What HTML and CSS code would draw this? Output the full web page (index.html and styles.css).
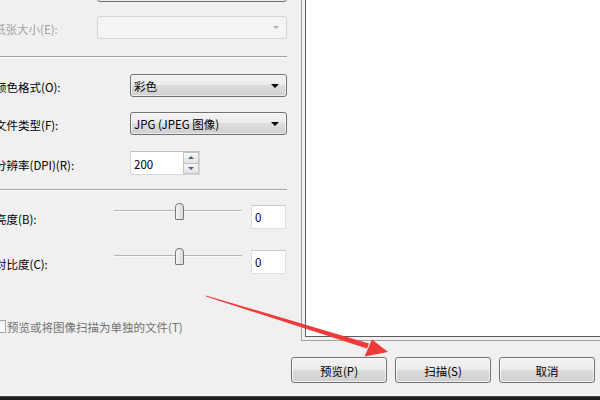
FILE: index.html
```html
<!DOCTYPE html>
<html>
<head>
<meta charset="utf-8">
<link rel="stylesheet" href="styles.css">
</head>
<body>
<div class="window">
  <div class="main">
    <div class="settings">
      <div class="row row-top">
        <div class="label label-narrow"></div>
        <div class="combo combo-wide"></div>
      </div>
      <div class="row row-paper">
        <div class="label label-narrow disabled">纸张大小(E):</div>
        <div class="combo combo-wide combo-disabled"><span class="caret caret-gray"></span></div>
      </div>
      <div class="sep sep1"></div>
      <div class="row row-color">
        <div class="label">颜色格式(O):</div>
        <div class="combo"><span class="combo-text">彩色</span><span class="caret"></span></div>
      </div>
      <div class="row row-type">
        <div class="label">文件类型(F):</div>
        <div class="combo"><span class="combo-text">JPG (JPEG 图像)</span><span class="caret"></span></div>
      </div>
      <div class="row row-dpi">
        <div class="label">分辨率(DPI)(R):</div>
        <div class="spin">
          <span class="spin-text">200</span>
          <div class="spin-btns">
            <div class="spin-btn"><span class="spin-up"></span></div>
            <div class="spin-btn"><span class="spin-down"></span></div>
          </div>
        </div>
      </div>
      <div class="sep sep2"></div>
      <div class="row row-bright">
        <div class="label label-slider">亮度(B):</div>
        <div class="slider"><div class="track"></div><div class="thumb"></div></div>
        <div class="valbox">0</div>
      </div>
      <div class="row row-contrast">
        <div class="label label-slider">对比度(C):</div>
        <div class="slider"><div class="track"></div><div class="thumb"></div></div>
        <div class="valbox">0</div>
      </div>
      <div class="row row-check">
        <div class="checkbox"></div>
        <div class="check-text">预览或将图像扫描为单独的文件(T)</div>
      </div>
    </div>
    <div class="preview-frame"><div class="preview"></div></div>
  </div>
  <div class="buttons">
    <div class="btn">预览(P)</div>
    <div class="btn">扫描(S)</div>
    <div class="btn">取消</div>
  </div>
  <div class="taskbar"></div>
  <svg class="arrow" width="600" height="400" viewBox="0 0 600 400">
    <polygon points="206,295.4 369,343.6 367,348.4 206,296.6" fill="#f03a3a"/>
    <polygon points="388,352 364.5,356.5 372,339.5" fill="#f03a3a"/>
  </svg>
</div>
</body>
</html>
```
FILE: styles.css
```css
html, body {
  margin: 0;
  padding: 0;
}
body {
  width: 600px;
  height: 400px;
  overflow: hidden;
  background: #f0f0f0;
  font-family: "Noto Sans CJK SC", "Noto Sans", sans-serif;
  font-size: 11.5px;
  color: #000;
}
.window {
  position: relative;
  width: 600px;
  height: 400px;
  display: flex;
  flex-direction: column;
}
.main {
  display: flex;
  height: 341px;
  flex: none;
}
.settings {
  width: 301px;
  flex: none;
  display: flex;
  flex-direction: column;
}
.row {
  display: flex;
  align-items: center;
  flex: none;
}
.label {
  flex: 0 0 135px;
  margin-left: -5px;
  white-space: nowrap;
  line-height: 16px;
  padding-top: 3px;
}
.label-narrow { flex-basis: 103px; margin-left: -6px; }
.label-slider { flex-basis: 119px; }
.disabled { color: #a3a3a3; }

.row-top { height: 23px; margin-top: -21px; }
.row-paper { height: 23px; margin-top: 14px; }
.sep {
  height: 1px;
  width: 287px;
  background: #a0a0a0;
  border-bottom: 1px solid #ffffff;
  flex: none;
}
.sep1 { margin-top: 17px; }
.row-color { height: 23px; margin-top: 16px; }
.row-type { height: 23px; margin-top: 15px; }
.row-dpi { height: 24px; margin-top: 16px; }
.sep2 { margin-top: 14px; }
.row-bright { height: 24px; margin-top: 14px; }
.row-contrast { height: 24px; margin-top: 21px; }
.row-check { height: 13px; margin-top: 46px; }

.combo {
  box-sizing: border-box;
  width: 157px;
  height: 23px;
  border: 1px solid #707070;
  border-radius: 3px;
  background: linear-gradient(#f2f2f2 0%, #ebebeb 50%, #dddddd 50%, #cfcfcf 100%);
  box-shadow: inset 0 0 0 1px rgba(255,255,255,0.6);
  display: flex;
  align-items: center;
  justify-content: space-between;
  padding: 0 7px 0 3px;
}
.combo-wide { width: 190px; }
.combo-disabled {
  border-color: #d5d5d5;
  background: #f4f4f4;
  box-shadow: none;
  justify-content: flex-end;
}
.combo-text {
  line-height: 16px;
  padding-top: 1px;
  white-space: nowrap;
}
.caret {
  width: 0;
  height: 0;
  border-left: 4px solid transparent;
  border-right: 4px solid transparent;
  border-top: 4px solid #000;
}
.caret-gray { border-top-color: #b0b0b0; border-left-width: 3px; border-right-width: 3px; border-top-width: 3px; }

.spin {
  box-sizing: border-box;
  width: 70px;
  height: 24px;
  background: #fff;
  border: 1px solid #d8d8d8;
  border-top-color: #bdbdbd;
  display: flex;
  align-items: center;
  justify-content: space-between;
  padding-left: 3px;
}
.spin-text { line-height: 16px; padding-top: 1px; }
.spin-btns {
  width: 16px;
  height: 22px;
  display: flex;
  flex-direction: column;
}
.spin-btn {
  box-sizing: border-box;
  flex: 1;
  border: 1px solid #c3c3c3;
  background: linear-gradient(#f7f7f7, #e4e4e4);
  display: flex;
  align-items: center;
  justify-content: center;
}
.spin-btn + .spin-btn { border-top: none; }
.spin-up {
  width: 0; height: 0;
  border-left: 3px solid transparent;
  border-right: 3px solid transparent;
  border-bottom: 3px solid #4b5f8a;
}
.spin-down {
  width: 0; height: 0;
  border-left: 3px solid transparent;
  border-right: 3px solid transparent;
  border-top: 3px solid #4b5f8a;
}

.slider {
  position: relative;
  width: 128px;
  height: 17px;
  align-self: flex-start;
  margin-top: -2px;
  flex: none;
}
.track {
  position: absolute;
  left: 0;
  right: 0;
  top: 7px;
  height: 1px;
  background: #b5b5b5;
  border-bottom: 1px solid #fcfcfc;
}
.thumb {
  position: absolute;
  left: 61px;
  top: 0;
  box-sizing: border-box;
  width: 9px;
  height: 17px;
  border: 1px solid #7a7a7a;
  border-radius: 4px 4px 1px 1px;
  background: linear-gradient(90deg, #f6f6f6, #dadada);
}
.valbox {
  box-sizing: border-box;
  width: 35px;
  height: 24px;
  margin-left: 9px;
  background: #fff;
  border: 1px solid #e0e0e0;
  border-top-color: #c9c9c9;
  padding-left: 3px;
  line-height: 20px;
  padding-top: 1px;
}

.checkbox {
  box-sizing: border-box;
  width: 13px;
  height: 13px;
  margin-left: -7px;
  border: 1px solid #a8a8a8;
  background: linear-gradient(#f4f4f4, #ffffff);
  flex: none;
}
.check-text {
  margin-left: 1px;
  color: #707070;
  white-space: nowrap;
  line-height: 16px;
}

.preview-frame {
  flex: 1;
  border-left: 1px solid #a0a0a0;
  border-bottom: 1px solid #a0a0a0;
  padding: 0 0 3px 3px;
  display: flex;
}
.preview {
  flex: 1;
  background: #fff;
  border-left: 1px solid #5f5f5f;
  border-bottom: 1px solid #5f5f5f;
}

.buttons {
  height: 55px;
  flex: none;
  box-sizing: border-box;
  padding: 16px 5px 0 0;
  display: flex;
  justify-content: flex-end;
  align-items: flex-start;
  gap: 8px;
}
.btn {
  box-sizing: border-box;
  width: 96px;
  height: 26px;
  border: 1px solid #707070;
  border-radius: 3px;
  background: linear-gradient(#f2f2f2 0%, #ebebeb 50%, #dddddd 50%, #cfcfcf 100%);
  box-shadow: inset 0 0 0 1px rgba(255,255,255,0.7);
  display: flex;
  align-items: center;
  justify-content: center;
  line-height: 16px;
  padding-top: 1px;
}
.taskbar {
  flex: 1;
  background: #1e1e1e;
  border-top: 1px solid #4a4a4a;
}
.arrow {
  position: absolute;
  left: 0;
  top: 0;
  pointer-events: none;
}
```
